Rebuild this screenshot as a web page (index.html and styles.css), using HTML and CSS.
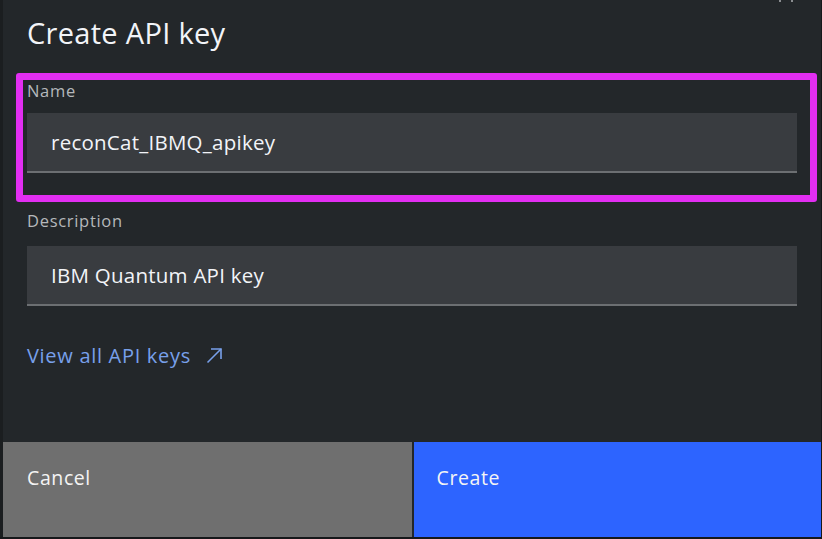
FILE: index.html
```html
<!DOCTYPE html>
<html lang="en">
<head>
<meta charset="utf-8">
<title>Create API key</title>
<link rel="stylesheet" href="styles.css">
</head>
<body>
<div class="screen">
  <div class="edge"></div>
  <div class="modal">
    <div class="close-marks"><span></span><span></span></div>
    <div class="body">
      <h2 class="title">Create API key</h2>
      <div class="highlight">
        <label class="label">Name</label>
        <div class="input">reconCat_IBMQ_apikey</div>
      </div>
      <div class="field">
        <label class="label">Description</label>
        <div class="input">IBM Quantum API key</div>
      </div>
      <a class="link" href="#"><span>View all API keys</span>
        <svg class="arrow" width="19" height="19" viewBox="0 0 19 19" fill="none" stroke="currentColor" stroke-width="1.6"><path d="M2.5 16.5 L16 3"/><path d="M6 3 H16 V13"/></svg>
      </a>
    </div>
    <div class="footer">
      <button class="btn btn-secondary">Cancel</button>
      <button class="btn btn-primary">Create</button>
    </div>
  </div>
</div>
</body>
</html>
```
FILE: styles.css
```css
* { box-sizing: border-box; }
html, body { margin: 0; padding: 0; }
body {
  width: 822px;
  height: 539px;
  overflow: hidden;
  background: #16181a;
  font-family: "Open Sans", "Noto Sans", sans-serif;
}
.screen {
  display: flex;
  width: 822px;
  height: 537px;
}
.edge {
  width: 3px;
  background: #1b1e20;
  flex: none;
}
.modal {
  position: relative;
  flex: 1;
  display: flex;
  flex-direction: column;
  background: #23272a;
  margin-right: 1px;
}
.close-marks {
  position: absolute;
  top: 0;
  right: 28px;
  display: flex;
  gap: 10px;
}
.close-marks span {
  width: 2px;
  height: 2px;
  background: #8a8d90;
}
.body {
  flex: 1;
  padding: 0 24px 0 24px;
  display: flex;
  flex-direction: column;
}
.title {
  margin: 14px 0 0;
  font-weight: 400;
  font-size: 29px;
  letter-spacing: 0.3px;
  line-height: 38px;
  color: #f2f4f8;
}
.highlight {
  margin: 21px -20px 0 -11px;
  border: 7px solid #e22ef2;
  border-radius: 3px;
  padding: 0 13px 22px 4px;
}
.label {
  display: block;
  font-size: 16.5px;
  letter-spacing: 0.7px;
  line-height: 20px;
  color: #b5b8bb;
  margin-top: 1px;
  margin-bottom: 12px;
}
.field { margin-top: 8px; }
.field .label { margin-bottom: 15px; }
.input {
  height: 60px;
  background: #393c40;
  border-bottom: 2px solid #6c6f72;
  padding: 0 24px;
  display: flex;
  align-items: center;
  font-size: 20.5px;
  letter-spacing: 0.25px;
  color: #f2f4f8;
}
.link {
  margin-top: 36px;
  display: inline-flex;
  align-items: center;
  gap: 14px;
  align-self: flex-start;
  font-size: 20px;
  letter-spacing: 0.7px;
  color: #78a0ea;
  text-decoration: none;
}
.arrow { color: #78a0ea; }
.footer {
  display: flex;
  height: 95px;
  gap: 2px;
  background: #23272a;
}
.btn {
  flex: 1;
  border: 0;
  margin: 0;
  font-family: inherit;
  font-size: 19.5px;
  letter-spacing: 0.6px;
  color: #f4f4f4;
  text-align: left;
  padding: 0 24px 24px;
  display: flex;
  align-items: center;
}
.btn-secondary { background: #6f6f6f; }
.btn-primary { background: #2d64ff; padding-left: 23px; }
```
